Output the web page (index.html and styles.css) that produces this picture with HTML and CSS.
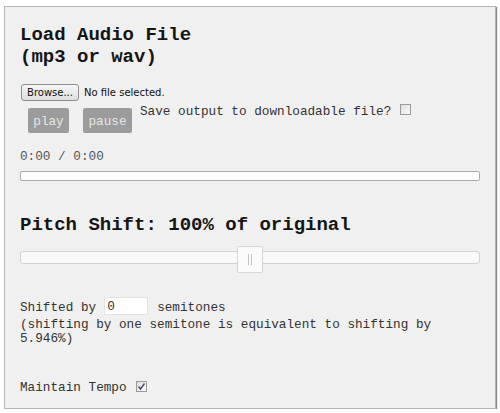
FILE: index.html
```html
<!DOCTYPE html>
<html>
<head>
<meta charset="utf-8">
<link rel="stylesheet" href="styles.css">
</head>
<body>
<div class="panel">
  <h1 class="title">Load Audio File<br>(mp3 or wav)</h1>
  <div class="file-row">
    <span class="browse">Browse...</span>
    <span class="nofile">No file selected.</span>
  </div>
  <div class="ctrl-row">
    <span class="btn btn-play">play</span>
    <span class="btn btn-pause">pause</span>
    <span class="save">Save output to downloadable file?</span>
    <span class="cb cb-save"></span>
  </div>
  <div class="time">0:00 / 0:00</div>
  <div class="progress"></div>
  <h2 class="pitch">Pitch Shift: 100% of original</h2>
  <div class="slider">
    <div class="track"></div>
    <div class="thumb"><span class="grip"></span><span class="grip"></span></div>
  </div>
  <div class="shift-row">
    <span class="lbl">Shifted by</span>
    <span class="num">0</span>
    <span class="lbl">semitones</span>
  </div>
  <p class="note">(shifting by one semitone is equivalent to shifting by 5.946%)</p>
  <div class="tempo-row">
    <span class="lbl">Maintain Tempo</span>
    <span class="cb cb-tempo"><svg width="9" height="9" viewBox="0 0 9 9"><path d="M1.5 4.5 L3.5 7 L7.5 1.5" fill="none" stroke="#4a4a6a" stroke-width="1.4"/></svg></span>
  </div>
</div>
</body>
</html>
```

FILE: styles.css
```css
html, body {
  margin: 0;
  padding: 0;
  background: #ffffff;
}

body {
  font-family: "Liberation Mono", "Courier New", monospace;
  font-size: 12.7px;
  color: #333;
}

.panel {
  box-sizing: border-box;
  margin: 6px 0 0 4px;
  width: 492px;
  height: 403px;
  background: #f0f0f0;
  border: 1px solid #b4b4b4;
  box-shadow: 1px 1px 1px #8a8a8a;
  padding: 0 15px;
  display: flex;
  flex-direction: column;
  align-items: stretch;
}

.title, .pitch {
  margin: 0;
  font-size: 19px;
  line-height: 22px;
  font-weight: bold;
  color: #151515;
}

.title {
  margin-top: 17px;
}

.file-row {
  margin-top: 16px;
  height: 17px;
  display: flex;
  align-items: center;
  font-family: "DejaVu Sans", "Liberation Sans", sans-serif;
  font-size: 10px;
  color: #111;
}

.browse {
  box-sizing: border-box;
  margin-left: 1px;
  width: 58px;
  height: 17px;
  border: 1px solid #8f8f8f;
  border-radius: 3px;
  background: linear-gradient(#f6f6f6, #dedede);
  display: flex;
  align-items: center;
  justify-content: center;
}

.nofile {
  margin-left: 5px;
}

.ctrl-row {
  margin-top: 2px;
  height: 30px;
  display: flex;
  align-items: flex-start;
}

.btn {
  box-sizing: border-box;
  margin-top: 5px;
  height: 25px;
  background: #9c9c9c;
  color: #e6e6e6;
  border-radius: 2px;
  display: flex;
  align-items: center;
  justify-content: center;
  padding-top: 1px;
}

.btn-play {
  margin-left: 8px;
  width: 41px;
}

.btn-pause {
  margin-left: 14px;
  width: 49px;
}

.save {
  margin-left: 8px;
  padding-top: 2px;
  line-height: 14px;
}

.cb {
  box-sizing: border-box;
  width: 11px;
  height: 11px;
  border: 1px solid #9a9a9a;
  background: linear-gradient(135deg, #dcdcdc, #fbfbfb);
  display: inline-flex;
  align-items: center;
  justify-content: center;
}

.cb-save {
  margin-left: 9px;
  margin-top: 1px;
}

.time {
  margin-top: 17px;
  line-height: 14px;
  color: #555;
}

.progress {
  box-sizing: border-box;
  margin-top: 7px;
  height: 10px;
  background: #ffffff;
  border: 1px solid #a8a8a8;
  border-radius: 2px;
}

.pitch {
  margin-top: 33px;
}

.slider {
  margin-top: 10px;
  height: 27px;
  position: relative;
}

.track {
  box-sizing: border-box;
  margin-top: 5px;
  height: 13px;
  background: #f9f9f9;
  border: 1px solid #d2d2d2;
  border-radius: 3px;
}

.thumb {
  box-sizing: border-box;
  position: absolute;
  left: 217px;
  top: 0;
  width: 26px;
  height: 27px;
  background: #fbfbfb;
  border: 1px solid #d6d6d6;
  border-radius: 2px;
  display: flex;
  align-items: center;
  justify-content: center;
  gap: 2px;
}

.grip {
  width: 1px;
  height: 11px;
  background: #c4c4c4;
}

.shift-row {
  margin-top: 24px;
  height: 18px;
  display: flex;
  align-items: center;
}

.lbl {
  padding-top: 3px;
}

.num {
  box-sizing: border-box;
  margin-left: 8px;
  margin-right: 9px;
  width: 44px;
  height: 18px;
  background: #ffffff;
  border: 1px solid #e2e2e2;
  padding-left: 2px;
  padding-top: 1px;
  line-height: 16px;
  color: #333;
}

.note {
  margin: 3px 0 0 0;
  line-height: 14px;
}

.tempo-row {
  margin-top: 33px;
  height: 14px;
  display: flex;
  align-items: center;
}

.cb-tempo {
  margin-left: 9px;
}
```
